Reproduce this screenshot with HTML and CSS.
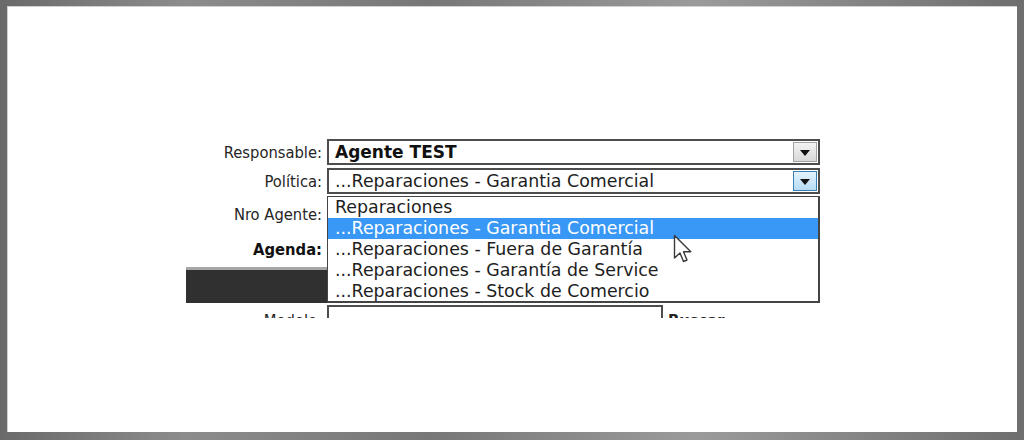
FILE: index.html
```html
<!DOCTYPE html>
<html lang="es">
<head>
<meta charset="utf-8">
<title>Política</title>
<link rel="stylesheet" href="styles.css">
</head>
<body>
<div class="frame">
  <div class="canvas">
    <div class="form">
      <div class="row r1">
        <span class="lbl">Responsable:</span>
        <div class="select">
          <span class="val strong">Agente TEST</span>
          <span class="btn"><span class="tri"></span></span>
        </div>
      </div>
      <div class="row r2">
        <span class="lbl">Política:</span>
        <div class="select">
          <span class="val">...Reparaciones - Garantia Comercial</span>
          <span class="btn btn-hot"><span class="tri"></span></span>
        </div>
      </div>
      <div class="row r3">
        <span class="lbl">Nro Agente:</span>
        <div class="input"></div>
      </div>
      <div class="row r4">
        <span class="lbl strong-lbl">Agenda:</span>
      </div>
      <div class="bar"></div>
      <div class="row r5">
        <span class="lbl">Modelo:</span>
        <div class="input short"></div>
        <span class="buscar">Buscar</span>
      </div>
      <ul class="list">
        <li class="item">Reparaciones</li>
        <li class="item sel">...Reparaciones - Garantia Comercial</li>
        <li class="item">...Reparaciones - Fuera de Garantía</li>
        <li class="item">...Reparaciones - Garantía de Service</li>
        <li class="item">...Reparaciones - Stock de Comercio</li>
      </ul>
    </div>
    <svg class="cursor" width="20" height="30" viewBox="0 0 20 30">
      <path d="M1.5 1.5 L1.5 24 L7 19 L10.5 27.5 L14 26 L10.5 17.8 L17.8 17.8 Z" fill="#ffffff" stroke="#3a3a3a" stroke-width="1.4" stroke-linejoin="round"/>
    </svg>
  </div>
</div>
</body>
</html>
```
FILE: styles.css
```css
html, body {
  margin: 0;
  padding: 0;
}

body {
  width: 1024px;
  height: 440px;
  overflow: hidden;
  font-family: "DejaVu Sans", Verdana, sans-serif;
}

.frame {
  width: 1024px;
  height: 440px;
  box-sizing: border-box;
  padding: 6px 7px 8px 7px;
  background:
    linear-gradient(90deg, #6a6a6a 0%, #8c8c8c 18%, #777 42%, #9b9b9b 68%, #6e6e6e 100%);
}

.canvas {
  position: relative;
  height: 100%;
  box-sizing: border-box;
  background: #ffffff;
  padding: 133px 0 0 179px;
  box-shadow: inset 1px 1px 0 #d0d0d0;
}

.form {
  position: relative;
  width: 634px;
  height: 179px;
  overflow: hidden;
}

.row {
  display: flex;
  align-items: center;
  gap: 5px;
  height: 26px;
}

.r2 { margin-top: 3px; }
.r3 { margin-top: 7px; }
.r4 { margin-top: 9px; }
.r5 { margin-top: 2px; align-items: flex-start; }

.lbl {
  width: 136px;
  flex: none;
  text-align: right;
  font-family: "DejaVu Sans Condensed", "DejaVu Sans", sans-serif;
  font-size: 16.4px;
  color: #262626;
  white-space: nowrap;
}

.strong-lbl {
  font-weight: bold;
  color: #111;
}

.r5 .lbl {
  padding-top: 6px;
}

.select {
  position: relative;
  flex: none;
  width: 493px;
  height: 26px;
  box-sizing: border-box;
  border: 2px solid #4d4d4d;
  background: #fff;
  display: flex;
  align-items: center;
  padding-left: 6px;
}

.val {
  flex: 1;
  font-size: 17.4px;
  color: #1e1e1e;
  white-space: nowrap;
}

.strong {
  font-weight: bold;
  font-size: 17px;
  color: #111;
}

.btn {
  position: absolute;
  right: 1px;
  top: 1px;
  width: 24px;
  height: 20px;
  box-sizing: border-box;
  border: 1px solid #a3a3a3;
  background: linear-gradient(#f4f4f4, #d9d9d9);
  display: flex;
  align-items: center;
  justify-content: center;
}

.btn-hot {
  border-color: #3c7fb1;
  background: linear-gradient(#e3f3fd, #b6dcf5);
}

.tri {
  width: 0;
  height: 0;
  border-left: 5px solid transparent;
  border-right: 5px solid transparent;
  border-top: 6px solid #111;
  margin-top: 2px;
}

.input {
  flex: none;
  width: 493px;
  height: 26px;
  box-sizing: border-box;
  border: 2px solid #4d4d4d;
  background: #fff;
}

.input.short {
  width: 336px;
}

.buscar {
  font-family: "DejaVu Sans Condensed", "DejaVu Sans", sans-serif;
  font-weight: bold;
  font-size: 16.4px;
  color: #222;
  padding-top: 6px;
}

.bar {
  margin-top: 5px;
  height: 36px;
  box-sizing: border-box;
  border-top: 3px solid #a6a6a6;
  background: #303030;
}

.list {
  position: absolute;
  left: 141px;
  top: 57px;
  width: 493px;
  height: 107px;
  box-sizing: border-box;
  margin: 0;
  padding: 0;
  list-style: none;
  background: #fff;
  border: 1px solid #444;
  border-right-width: 2px;
  border-bottom-width: 2px;
}

.item {
  height: 21px;
  line-height: 21px;
  padding-left: 7px;
  font-size: 17.4px;
  color: #1e1e1e;
  white-space: nowrap;
}

.item.sel {
  background: #3997f6;
  color: #ffffff;
}

.cursor {
  position: absolute;
  left: 666px;
  top: 228px;
}
```
